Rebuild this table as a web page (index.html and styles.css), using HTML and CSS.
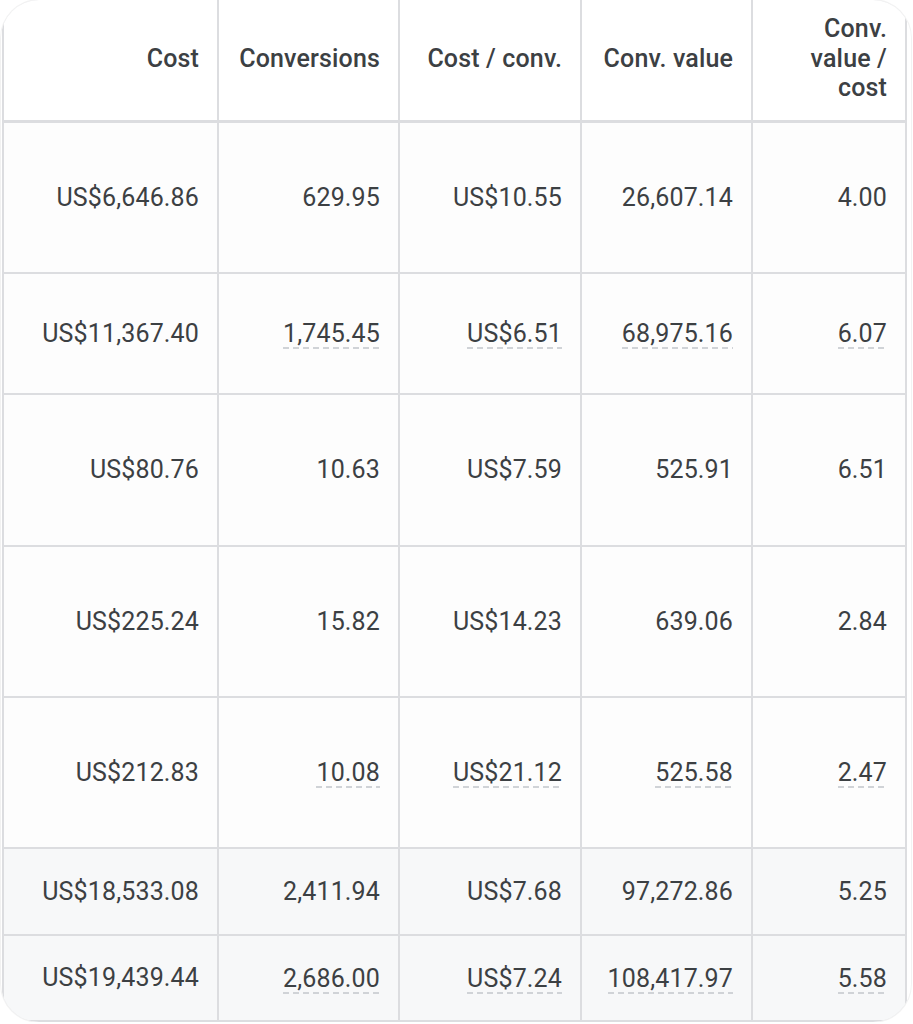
FILE: index.html
```html
<!DOCTYPE html>
<html lang="en">
<head>
<meta charset="utf-8">
<title>Metrics table</title>
<link rel="stylesheet" href="styles.css">
</head>
<body>
<div class="frame">
  <div class="grid">
    <div class="cell head">Cost</div>
    <div class="cell head">Conversions</div>
    <div class="cell head">Cost / conv.</div>
    <div class="cell head">Conv. value</div>
    <div class="cell head">Conv. value / cost</div>

    <div class="cell">US$6,646.86</div>
    <div class="cell">629.95</div>
    <div class="cell">US$10.55</div>
    <div class="cell">26,607.14</div>
    <div class="cell">4.00</div>

    <div class="cell">US$11,367.40</div>
    <div class="cell"><span class="dash">1,745.45</span></div>
    <div class="cell"><span class="dash">US$6.51</span></div>
    <div class="cell"><span class="dash">68,975.16</span></div>
    <div class="cell"><span class="dash">6.07</span></div>

    <div class="cell">US$80.76</div>
    <div class="cell">10.63</div>
    <div class="cell">US$7.59</div>
    <div class="cell">525.91</div>
    <div class="cell">6.51</div>

    <div class="cell">US$225.24</div>
    <div class="cell">15.82</div>
    <div class="cell">US$14.23</div>
    <div class="cell">639.06</div>
    <div class="cell">2.84</div>

    <div class="cell">US$212.83</div>
    <div class="cell"><span class="dash">10.08</span></div>
    <div class="cell"><span class="dash">US$21.12</span></div>
    <div class="cell"><span class="dash">525.58</span></div>
    <div class="cell"><span class="dash">2.47</span></div>

    <div class="cell total">US$18,533.08</div>
    <div class="cell total">2,411.94</div>
    <div class="cell total">US$7.68</div>
    <div class="cell total">97,272.86</div>
    <div class="cell total">5.25</div>

    <div class="cell total">US$19,439.44</div>
    <div class="cell total"><span class="dash">2,686.00</span></div>
    <div class="cell total"><span class="dash">US$7.24</span></div>
    <div class="cell total"><span class="dash">108,417.97</span></div>
    <div class="cell total"><span class="dash">5.58</span></div>
  </div>
</div>
</body>
</html>
```
FILE: styles.css
```css
html, body {
  margin: 0;
  padding: 0;
  background: #ffffff;
}

body {
  font-family: Roboto, "Liberation Sans", Arial, sans-serif;
  color: #3c4043;
  padding-left: 1px;
}

.frame {
  width: 910px;
  height: 1022px;
  border-radius: 38px;
  overflow: hidden;
  background: #ffffff;
  box-shadow: 0 0 0 1px rgba(0, 0, 0, 0.05);
}

.grid {
  display: grid;
  width: 905px;
  margin-left: 1px;
  box-sizing: border-box;
  grid-template-columns: 213px 179px 180px 169px 152px;
  grid-template-rows: 121px 149px 119px 150px 149px 149px 85px 84px;
  column-gap: 2px;
  row-gap: 2px;
  padding: 0 2px 2px 2px;
  background: #dcdde0;
}

.cell {
  display: flex;
  align-items: center;
  justify-content: flex-end;
  text-align: right;
  padding: 0 18px 0 14px;
  background: #fdfdfd;
  font-size: 25px;
  line-height: 30px;
  letter-spacing: 0.15px;
  color: #3c4043;
}

.head {
  background: #ffffff;
  font-weight: 500;
  border-bottom: 1px solid #dcdde0;
  padding-bottom: 3px;
  line-height: 29.5px;
}

.total {
  background: #f7f8f9;
}

.dash {
  display: inline-block;
  line-height: 25px;
  padding-bottom: 3px;
  margin-bottom: -3px;
  background-image: repeating-linear-gradient(to right, #d0d3d7 0 6px, transparent 6px 10px);
  background-size: 100% 2px;
  background-position: left bottom;
  background-repeat: no-repeat;
}
```
